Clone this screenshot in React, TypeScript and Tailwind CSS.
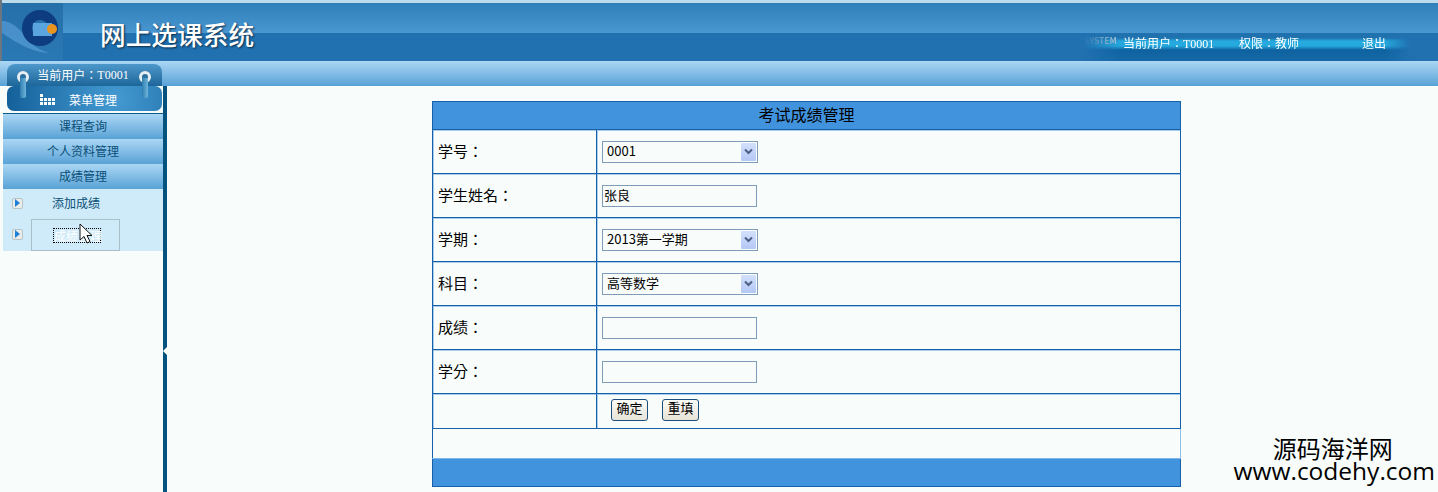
import React from "react";

const cn = `"Noto Sans CJK SC", "Liberation Sans", sans-serif`;
const cnColon = `"Noto Sans CJK TC", "Liberation Sans", sans-serif`;

const SubIcon = ({ className = "" }: { className?: string }) => (
  <span className={`flex h-[11px] w-[11px] shrink-0 items-center justify-center rounded-[2px] border border-[#b9c4c4] bg-[#e9ece9] ${className}`}>
    <span className="h-0 w-0 border-y-[4px] border-l-[5px] border-y-transparent border-l-[#2080d8]" />
  </span>
);

const Ring = ({ className }: { className: string }) => (
  <span className={`absolute top-[7px] h-[27px] w-[12px] ${className}`}>
    <span className="absolute left-0 top-0 h-[12px] w-[12px] rounded-full border-[3px] border-[#e6eef2] bg-[#2a6f9e]" />
    <span className="absolute left-[3px] top-[7px] h-[20px] w-[6px] rounded-b-[2px] bg-gradient-to-r from-[#2f7eb0] to-[#6fb6dc]" />
  </span>
);

const MenuItem = ({ label }: { label: string }) => (
  <div className="flex h-[25px] items-center justify-center bg-gradient-to-b from-[#abd7f4] to-[#58a2d6] pb-[2px] text-[12px] text-[#0a4f78]">
    {label}
  </div>
);

const UserText = () => (
  <>
    当前用户：<span className="[font-family:'Liberation_Serif',serif]">T0001</span>
  </>
);

const Sidebar = () => (
  <div className="flex h-full w-[167px] shrink-0">
    <div className="w-[163px] pl-[3px]">
      <div className="-ml-[3px] h-[27px] pb-[1px] pl-[7px]">
        <div className="flex h-[25px] w-[155px] items-center justify-center rounded-[7px] bg-[radial-gradient(circle_at_70%_50%,#449ad2,#14609a)] pr-[12px] pt-[2px] text-[12px] text-white">
          <svg width="16" height="12" viewBox="0 0 16 12" className="mr-[13px]" fill="#fff">
            <rect x="0" y="0" width="3" height="3" />
            <rect x="0" y="4" width="3" height="3" />
            <rect x="0" y="8" width="3" height="3" />
            <rect x="4" y="4" width="3" height="3" />
            <rect x="4" y="8" width="3" height="3" />
            <rect x="8" y="4" width="3" height="3" />
            <rect x="8" y="8" width="3" height="3" />
            <rect x="12" y="4" width="3" height="3" />
            <rect x="12" y="8" width="3" height="3" />
          </svg>
          菜单管理
        </div>
      </div>
      <div className="border-t border-[#0a5a8a]">
        <MenuItem label="课程查询" />
        <MenuItem label="个人资料管理" />
        <MenuItem label="成绩管理" />
      </div>
      <div className="h-[62px] bg-[#cfebf9] text-[12px] text-[#0a4f78]">
        <div className="flex h-[30px] items-center pb-[2px] pl-[9px]">
          <SubIcon />
          <span className="ml-[29px]">添加成绩</span>
        </div>
        <div className="flex h-[32px] items-center pl-[9px]">
          <SubIcon className="-mt-[2px]" />
          <div className="relative ml-[8px] flex h-[32px] w-[89px] items-center justify-center border border-[#a9bfc9]">
            <span className="ml-[3px] w-[48px] border border-dotted border-black text-center leading-[13px] whitespace-nowrap text-white">成绩管理</span>
            <svg width="14" height="22" viewBox="0 0 14 22" className="absolute left-[47px] top-[3px]">
              <path d="M1 1 L1 17 L5 13.5 L8 20 L11 18.5 L8 12.5 L13 12.5 Z" fill="#fff" stroke="#111" strokeWidth="1" />
            </svg>
          </div>
        </div>
      </div>
    </div>
    <div className="relative w-[4px] bg-[#04537f]">
      <span className="absolute left-0 top-[261px] h-0 w-0 border-y-[4px] border-l-0 border-r-[4px] border-y-transparent border-r-white" />
    </div>
  </div>
);

const Select = ({ value }: { value: string }) => (
  <div className="relative h-[22px] w-[156px]">
    <select
      defaultValue={value}
      className="block h-full w-full appearance-none border border-[#7f9db9] bg-[#f8fdfb] pb-[1px] pl-[4px] text-[13px] leading-[18px] text-black"
    >
      <option>{value}</option>
    </select>
    <span className="pointer-events-none absolute right-[2px] top-[2px] flex h-[18px] w-[15px] items-center justify-center rounded-[1px] bg-gradient-to-b from-[#d3e0fb] to-[#b3c8f5]">
      <svg width="9" height="7" viewBox="0 0 9 7">
        <path d="M1 1.5 L4.5 5 L8 1.5" fill="none" stroke="#4d6185" strokeWidth="2" />
      </svg>
    </span>
  </div>
);

const TextBox = ({ value }: { value?: string }) => (
  <input
    readOnly
    value={value ?? ""}
    className="block h-[22px] w-[155px] border border-[#7f9db9] bg-[#f8fdfb] pb-[3px] pl-[1px] text-[13px] text-black outline-none"
  />
);

const Btn = ({ label }: { label: string }) => (
  <button
    type="button"
    className="h-[22px] w-[37px] rounded-[3px] border border-[#1c4f7c] bg-gradient-to-b from-[#fbfbf8] to-[#e6e3d8] pb-[4px] text-[13px] leading-[16px] text-black"
  >
    {label}
  </button>
);

const rows: { label: string; field: React.ReactNode }[] = [
  { label: "学号：", field: <Select value="0001" /> },
  { label: "学生姓名：", field: <TextBox value="张良" /> },
  { label: "学期：", field: <Select value="2013第一学期" /> },
  { label: "科目：", field: <Select value="高等数学" /> },
  { label: "成绩：", field: <TextBox /> },
  { label: "学分：", field: <TextBox /> },
];

const ScoreForm = () => (
  <table className="w-[749px] table-fixed border-collapse border border-[#1560a8] text-black">
    <colgroup>
      <col className="w-[164px]" />
      <col />
    </colgroup>
    <tbody>
      <tr className="h-[28px] bg-[#4193de]">
        <td colSpan={2} className="border border-[#1560a8] pb-[3px] text-center text-[16px] leading-[20px]">
          考试成绩管理
        </td>
      </tr>
      {rows.map((row) => (
        <tr key={row.label} className="h-[44px]">
          <td
            className="border border-[#1560a8] pl-[5px] text-[15px] shadow-[inset_1px_1px_0_#a9cdee]"
            style={{ fontFamily: cnColon }}
          >
            {row.label}
          </td>
          <td className="border border-[#1560a8] pl-[5px] shadow-[inset_1px_1px_0_#a9cdee]">{row.field}</td>
        </tr>
      ))}
      <tr className="h-[35px]">
        <td className="border border-[#1560a8] shadow-[inset_1px_1px_0_#a9cdee]" />
        <td className="border border-[#1560a8] pb-[2px] pl-[14px] shadow-[inset_1px_1px_0_#a9cdee]">
          <div className="flex gap-[14px]">
            <Btn label="确定" />
            <Btn label="重填" />
          </div>
        </td>
      </tr>
      <tr className="h-[30px]">
        <td colSpan={2} className="border-r border-[#8fc0ea]" />
      </tr>
      <tr className="h-[28px] bg-[#4193de]">
        <td colSpan={2} className="border-t border-b border-t-[#7fb5e8] border-b-[#1560a8]" />
      </tr>
    </tbody>
  </table>
);

const App = () => {
  return (
    <div
      className="relative flex h-[492px] w-[1438px] flex-col overflow-hidden bg-[#f8fdfb]"
      style={{ fontFamily: cn }}
    >
      {/* top banner */}
      <div className="border-l-2 border-[#6b7680]">
        <div className="h-[3px] bg-[#bcdcec]" />
        <div className="relative flex h-[58px] bg-[linear-gradient(#2f7fb8_0px,#4a97d2_30px,#2171b0_30px,#2171b0_58px)]">
          <div className="h-[57px] w-[61px] bg-[linear-gradient(#2670aa,#2a78b4)]">
            <svg width="61" height="57" viewBox="0 0 61 57">
              <path d="M0 18 C10 18 18 26 30 40 C34 45 40 48 48 50 C30 50 12 38 0 30 Z" fill="#5aa0d8" fillOpacity="0.65" />
              <circle cx="38" cy="25" r="13" fill="none" stroke="#0d3c80" strokeWidth="10" />
              <rect x="31" y="20" width="19" height="13" fill="#5aa5e0" />
              <circle cx="50" cy="26" r="5" fill="#e8951f" />
            </svg>
          </div>
          <div className="ml-[37px] mt-[15px] text-[25.7px] leading-[32px] font-medium text-white [text-shadow:1px_1px_2px_#0a2c48]">
            网上选课系统
          </div>
          <div className="ml-auto mr-[28px] mt-[30px] flex h-[28px] w-[327px] bg-[linear-gradient(#1f72ae_5px,#25a9de_8px,#25a9de_13px,#0f62a0_17px,#1668a6_28px)] pl-[1px] text-[12px] text-white [mask-image:linear-gradient(90deg,transparent,#000_12%,#000_92%,transparent)]">
            <span className="mt-[4px] w-[39px] text-[8.5px] leading-[7px] font-bold text-[#b5ccd8]">SYSTEM</span>
            <span className="mt-[2px] w-[90px] leading-[16px] whitespace-nowrap" style={{ fontFamily: cnColon }}>
              <UserText />
            </span>
            <span className="ml-[26px] mt-[2px] leading-[16px]" style={{ fontFamily: cnColon }}>权限：教师</span>
            <span className="ml-[63px] mt-[2px] leading-[16px]">退出</span>
          </div>
        </div>
      </div>
      {/* nav strip */}
      <div className="h-[25px] bg-gradient-to-b from-[#abd7f4] to-[#58a2d6] pl-[7px] pt-[3px]">
        <div
          className="relative flex h-[22px] w-[155px] items-center justify-center rounded-t-[8px] bg-gradient-to-b from-[#4d98cb] to-[#1c6699] pb-[1px] pr-[3px] text-[12px] text-white"
          style={{ fontFamily: cnColon }}
        >
          <UserText />
          <Ring className="left-[10px]" />
          <Ring className="left-[132px]" />
        </div>
      </div>
      {/* body */}
      <div className="flex flex-1">
        <Sidebar />
        <div className="pl-[265px] pt-[15px]">
          <ScoreForm />
        </div>
      </div>
      {/* site watermark */}
      <div className="absolute right-[3px] top-[436px] flex flex-col items-center text-[24.5px] leading-[24px] text-black">
        <span className="mr-[3px] text-[24px]">源码海洋网</span>
        <span className="-mt-[1px] [font-family:'Open_Sans',sans-serif]">www.codehy.com</span>
      </div>
    </div>
  );
};

export default App;
